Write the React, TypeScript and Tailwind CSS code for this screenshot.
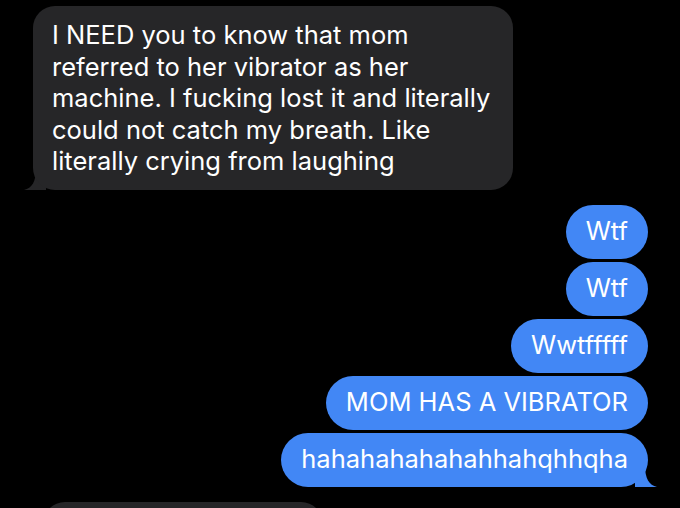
const incoming = [
  "I NEED you to know that mom",
  "referred to her vibrator as her",
  "machine. I fucking lost it and literally",
  "could not catch my breath. Like",
  "literally crying from laughing",
]

const outgoing = ["Wtf", "Wtf", "Wwtfffff", "MOM HAS A VIBRATOR", "hahahahahahahhahqhhqha"]

function LeftTail() {
  return (
    <svg className="absolute -left-[9px] bottom-0" width="22" height="22" viewBox="0 0 22 22">
      <path d="M22 0 L22 22 L0 22 C8 20 12 14 12 0 Z" fill="#262628" />
    </svg>
  )
}

function RightTail() {
  return (
    <svg className="absolute -right-[9px] bottom-0" width="22" height="22" viewBox="0 0 22 22">
      <path d="M0 0 L0 22 L22 22 C14 20 10 14 10 0 Z" fill="#4287f5" />
    </svg>
  )
}

export default function App() {
  return (
    <div
      className="w-[680px] h-[508px] bg-black overflow-hidden flex flex-col"
      style={{ fontFamily: "Inter, 'Liberation Sans', sans-serif" }}
    >
      <div className="relative ml-[33px] mt-[6px] w-[480px]">
        <LeftTail />
        <div className="relative bg-[#262628] rounded-[22px] pl-[19px] pr-2 pt-[13px] pb-[13px] text-white text-[25.5px] leading-[31.5px]">
          {incoming.map((line, i) => (
            <div key={i} className="whitespace-nowrap">
              {line}
            </div>
          ))}
        </div>
      </div>

      <div className="flex flex-col items-end gap-[3px] mt-[15px] pr-[32px]">
        {outgoing.map((msg, i) => (
          <div key={i} className="relative">
            {i === outgoing.length - 1 && <RightTail />}
            <div className="relative bg-[#4287f5] rounded-[27px] h-[54px] px-[20px] flex items-center text-white text-[25.5px]">
              {msg}
            </div>
          </div>
        ))}
      </div>

      {/* next incoming bubble, cut off by the bottom edge */}
      <div className="ml-[43px] mt-[15px] w-[280px] h-[60px] bg-[#262628] rounded-[22px] shrink-0" />
    </div>
  )
}
